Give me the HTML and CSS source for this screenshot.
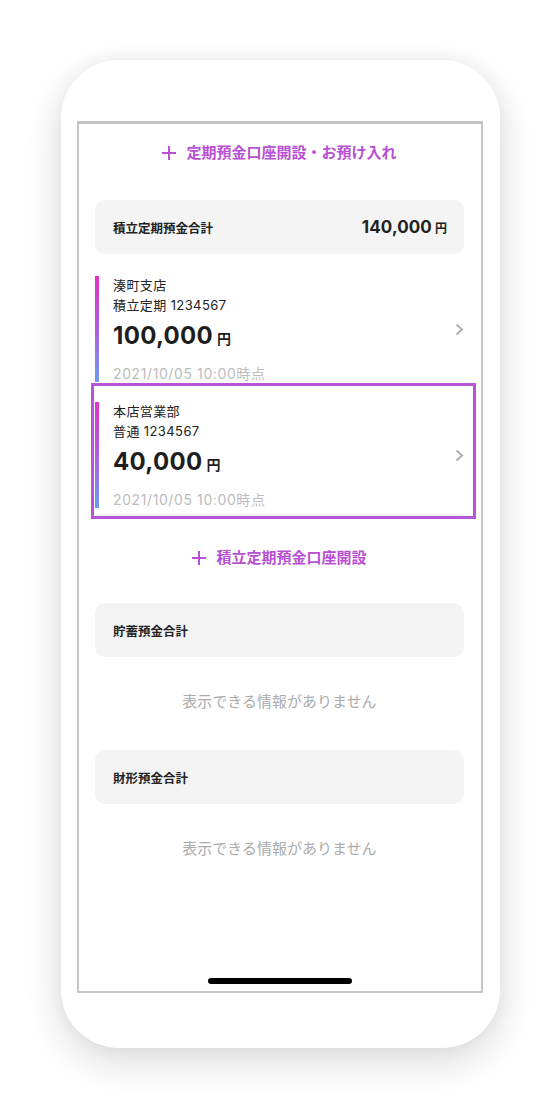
FILE: index.html
```html
<!DOCTYPE html>
<html lang="ja">
<head>
<meta charset="utf-8">
<title>預金</title>
<link rel="stylesheet" href="styles.css">
</head>
<body>
<div class="phone">
  <div class="screen">
    <div class="content">
      <div class="add-link add-link-first">
        <svg class="plus" width="14" height="14" viewBox="0 0 14 14"><path d="M7 0V14M0 7H14" stroke="currentColor" stroke-width="2" fill="none"/></svg>
        <span>定期預金口座開設・お預け入れ</span>
      </div>

      <div class="summary">
        <span class="summary-label">積立定期預金合計</span>
        <span class="summary-amount">140,000<span class="yen">円</span></span>
      </div>

      <div class="account account-first">
        <div class="bar"></div>
        <div class="account-body">
          <div class="line">湊町支店</div>
          <div class="line">積立定期 1234567</div>
          <div class="amount">100,000<span class="yen">円</span></div>
          <div class="date">2021/10/05 10:00時点</div>
        </div>
        <svg class="chevron" width="9" height="13" viewBox="0 0 9 13"><path d="M1.5 1.5L7 6.5L1.5 11.5" stroke="currentColor" stroke-width="2" fill="none"/></svg>
      </div>

      <div class="highlight">
        <div class="account">
          <div class="bar"></div>
          <div class="account-body">
            <div class="line">本店営業部</div>
            <div class="line">普通 1234567</div>
            <div class="amount">40,000<span class="yen">円</span></div>
            <div class="date">2021/10/05 10:00時点</div>
          </div>
          <svg class="chevron" width="9" height="13" viewBox="0 0 9 13"><path d="M1.5 1.5L7 6.5L1.5 11.5" stroke="currentColor" stroke-width="2" fill="none"/></svg>
        </div>
      </div>

      <div class="add-link add-link-second">
        <svg class="plus" width="14" height="14" viewBox="0 0 14 14"><path d="M7 0V14M0 7H14" stroke="currentColor" stroke-width="2" fill="none"/></svg>
        <span>積立定期預金口座開設</span>
      </div>

      <div class="summary summary-gap">
        <span class="summary-label">貯蓄預金合計</span>
      </div>
      <div class="empty">表示できる情報がありません</div>

      <div class="summary summary-gap2">
        <span class="summary-label">財形預金合計</span>
      </div>
      <div class="empty">表示できる情報がありません</div>
    </div>
    <div class="home-indicator"></div>
  </div>
</div>
</body>
</html>
```

FILE: styles.css
```css
html, body {
  margin: 0;
  padding: 0;
  background: #ffffff;
}
body {
  width: 560px;
  height: 1108px;
  overflow: hidden;
  padding: 60px 0 0 61px;
  box-sizing: border-box;
  font-family: "Inter", "Noto Sans CJK JP", sans-serif;
  color: #222222;
}
.phone {
  width: 439px;
  height: 988px;
  box-sizing: border-box;
  padding: 61px 17px 55px 16px;
  background: #ffffff;
  border-radius: 58px;
  box-shadow: 0 14px 40px rgba(0, 0, 0, 0.14), 0 0 18px rgba(0, 0, 0, 0.05);
}
.screen {
  height: 872px;
  box-sizing: border-box;
  border: 2px solid #c6c6c6;
  border-top: 3px solid #c2c2c2;
  display: flex;
  flex-direction: column;
  background: #ffffff;
}
.content {
  display: flex;
  flex-direction: column;
  padding: 19px 17px 0 16px;
}
.add-link {
  display: flex;
  align-items: center;
  justify-content: center;
  gap: 10px;
  height: 20px;
  color: #b84fd4;
  font-size: 15px;
  font-weight: 700;
  line-height: 20px;
}
.add-link-second {
  margin-top: 29px;
}
.plus {
  display: block;
}
.summary {
  display: flex;
  align-items: center;
  justify-content: space-between;
  height: 54px;
  box-sizing: border-box;
  padding: 0 17px 0 18px;
  margin-top: 37px;
  background: #f4f4f4;
  border-radius: 10px;
}
.summary-gap {
  margin-top: 35px;
}
.summary-gap2 {
  margin-top: 38px;
}
.summary-label {
  font-size: 12.5px;
  font-weight: 700;
  color: #222222;
}
.summary-amount {
  font-size: 17px;
  font-weight: 700;
  color: #222222;
  letter-spacing: 0.1px;
}
.summary-amount .yen {
  font-size: 12px;
  margin-left: 3px;
}
.account {
  display: flex;
  align-items: center;
  height: 106px;
}
.account-first {
  margin-top: 22px;
}
.bar {
  align-self: stretch;
  width: 4px;
  background: linear-gradient(to bottom, #e232c6, #b05ee0 50%, #6a9cf2);
}
.account-body {
  flex: 1;
  padding-left: 14px;
}
.line {
  font-size: 13px;
  line-height: 20px;
  color: #222222;
  letter-spacing: 0.4px;
}
.amount {
  margin-top: 5px;
  font-size: 24px;
  line-height: 32px;
  font-weight: 700;
  color: #1e1e1e;
  letter-spacing: 0.3px;
}
.amount .yen {
  font-size: 14px;
  margin-left: 4px;
}
.date {
  margin-top: 9px;
  font-size: 14px;
  line-height: 20px;
  color: #bdbdbd;
  letter-spacing: 0.6px;
}
.chevron {
  color: #b0b0b0;
  display: block;
}
.highlight {
  margin: 1px -12px 0 -4px;
  border: 3px solid #b755d6;
  padding: 16px 9px 8px 1px;
}
.empty {
  margin-top: 35px;
  text-align: center;
  font-size: 15px;
  line-height: 20px;
  color: #ababab;
}
.home-indicator {
  margin: auto auto 7px;
  width: 144px;
  height: 6px;
  border-radius: 3px;
  background: #000000;
}
```
